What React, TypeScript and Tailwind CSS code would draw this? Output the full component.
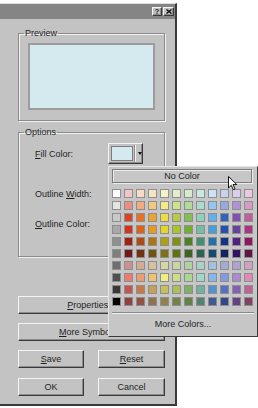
import type { ReactNode } from 'react';

const PALETTE: string[][] = [
  ['#ffffff', '#f2c6c4', '#f6dcc2', '#f6e4c2', '#f6f2c4', '#e4eec8', '#d4ebcc', '#c8e8e2', '#cce2f6', '#cad2f0', '#dacdee', '#ecc8e2'],
  ['#e4e4e4', '#ee8c84', '#f2aa7e', '#f4c87e', '#f4ea84', '#cee28c', '#b2da98', '#a8dccc', '#94c4f0', '#9aa8e2', '#b292d6', '#da98c6'],
  ['#c8c8c8', '#dc4224', '#ec7024', '#eea232', '#eedc42', '#b6cc42', '#82be50', '#92d0be', '#62aeee', '#3262c0', '#8250b0', '#be5e9c'],
  ['#a8a8a8', '#d4321a', '#de621a', '#e69a22', '#e6d624', '#a8c624', '#70ae32', '#72bea8', '#42a0de', '#2252b0', '#6442a0', '#ae3282'],
  ['#909090', '#a02212', '#ae4a12', '#ae7212', '#ae9e14', '#809014', '#508024', '#429070', '#2272ae', '#143482', '#522282', '#901464'],
  ['#7e7e7e', '#701a1a', '#703212', '#705212', '#7e7014', '#607014', '#406222', '#306252', '#144a70', '#142262', '#321262', '#601444'],
  ['#6e6e6e', '#cc9090', '#d4aa92', '#d6c0a2', '#d6d6a2', '#c8d6a2', '#b2d0a2', '#aad0c8', '#a2c0e0', '#a2aad6', '#b2a2d0', '#d0a2c2'],
  ['#505050', '#ee7a72', '#ee9a72', '#eec272', '#eeee82', '#c8e082', '#aad892', '#a2d6c8', '#82b8ee', '#829ae0', '#aa8ad0', '#e08ab8'],
  ['#383838', '#c65252', '#c67a4a', '#c6a05a', '#c6c05a', '#aac05a', '#82b062', '#72b0a2', '#5292d0', '#5272c0', '#8262b0', '#c06292'],
  ['#000000', '#904242', '#905242', '#907252', '#90824a', '#72824a', '#62824a', '#528272', '#425a90', '#324a82', '#624282', '#824262'],
];

const raised =
  'border border-t-[#f4f4f4] border-l-[#f4f4f4] border-r-[#3a3a3a] border-b-[#3a3a3a] shadow-[inset_-1px_-1px_0_#8c8c8c]';

const etched =
  'p-0 border border-[#8a8a8a] shadow-[inset_1px_1px_0_#f2f2f2,1px_1px_0_#f2f2f2]';

function Button({ children, className }: { children: ReactNode; className: string }) {
  return (
    <div className={`flex items-center justify-center h-[18px] ${raised} ${className}`}>
      <span>{children}</span>
    </div>
  );
}

function U({ children }: { children: ReactNode }) {
  return <span className="underline underline-offset-[1px] decoration-[1px]">{children}</span>;
}

export default function App() {
  return (
    <div className="relative w-[258px] h-[408px] bg-white overflow-hidden font-['Liberation_Sans',Arial,sans-serif] text-[9px] leading-[10px] text-[#1e1e1e]">
      {/* dialog */}
      <div className="mt-[3px] w-[177px] h-[403px] bg-[#c3c3c3] border-t border-t-[#dedede] border-r-2 border-r-[#3a3a3a] border-b-2 border-b-[#3a3a3a] flex flex-col">
        <div className="h-[15px] bg-[#858585] flex items-center justify-end gap-[1px] pr-[1px]">
          <div className={`w-[10px] h-[9px] bg-[#c3c3c3] flex items-center justify-center text-[8px] font-bold leading-none ${raised}`}>
            ?
          </div>
          <div className={`w-[11px] h-[9px] bg-[#c3c3c3] flex items-center justify-center ${raised}`}>
            <svg width="6" height="5" viewBox="0 0 6 5">
              <path d="M0.5 0.5 L5.5 4.5 M5.5 0.5 L0.5 4.5" stroke="#111" strokeWidth="1.4" />
            </svg>
          </div>
        </div>

        <div className="pl-[18px] pt-[9px] flex flex-col">
          <fieldset className={`w-[147px] h-[93px] ${etched}`}>
            <legend className="ml-[5px] px-[1px] leading-[10px]">Preview</legend>
            <div className="pl-[9px] pt-[5px]">
              <div className="w-[127px] h-[67px] border-2 border-[#9c9c9c] bg-[#d5eaee]" />
            </div>
          </fieldset>

          <fieldset className={`mt-[6px] w-[147px] h-[130px] ${etched}`}>
            <legend className="ml-[5px] px-[1px] leading-[10px]">Options</legend>
            <div className="pl-[16px] pt-[6px]">
              <div className="flex items-center h-[21px]">
                <div className="w-[73px]">
                  <U>F</U>ill Color:
                </div>
                <div className={`w-[35px] h-[21px] flex items-center pl-[2px] ${raised}`}>
                  <div className="w-[22px] h-[15px] border border-[#7c7c7c] bg-[#d5eaee]" />
                  <div className="ml-[1px] w-[1px] h-[17px] bg-[#8c8c8c]" />
                  <div className="w-[1px] h-[17px] bg-[#f4f4f4]" />
                  <svg className="ml-[2px]" width="4" height="3" viewBox="0 0 4 3">
                    <path d="M0 0 H4 L2 3 Z" fill="#111" />
                  </svg>
                </div>
              </div>
              <div className="mt-[20px] h-[20px] flex items-center">
                <span>
                  Outline <U>W</U>idth:
                </span>
              </div>
              <div className="mt-[10px] h-[20px] flex items-center">
                <span>
                  <U>O</U>utline Color:
                </span>
              </div>
            </div>
          </fieldset>

          <Button className="mt-[39px] w-[147px]">
            <U>P</U>roperties...
          </Button>
          <Button className="mt-[9px] w-[147px]">
            <U>M</U>ore Symbols...
          </Button>
          <div className="mt-[9px] flex gap-[14px]">
            <Button className="w-[66px]">
              <U>S</U>ave
            </Button>
            <Button className="w-[67px]">
              <U>R</U>eset
            </Button>
          </div>
          <div className="mt-[10px] flex gap-[14px]">
            <Button className="w-[66px]">OK</Button>
            <Button className="w-[67px]">Cancel</Button>
          </div>
        </div>
      </div>

      {/* colour picker popup */}
      <div className="absolute left-[108px] top-[166px] w-[150px] h-[171px] bg-[#c6c6c6] border border-t-[#e6e6e6] border-l-[#e6e6e6] border-r-[#3a3a3a] border-b-[#3a3a3a] flex flex-col px-[3px] pt-[2px]">
        <div className="w-[140px] h-[14px] border border-[#7c7c7c] shadow-[1px_1px_0_#ececec,inset_1px_1px_0_#ececec] flex items-center justify-center">
          No Color
        </div>
        <div className="mt-[6px] grid grid-cols-[repeat(12,9px)] gap-[3px]">
          {PALETTE.flat().map((c, i) => (
            <div key={i} className="w-[9px] h-[9px] border border-[#8e8e8e]" style={{ backgroundColor: c }} />
          ))}
        </div>
        <div className="mt-[6px] border-t border-t-[#8a8a8a] border-b border-b-[#efefef]" />
        <div className="h-[19px] flex items-center justify-center">More Colors...</div>
      </div>

      {/* mouse pointer */}
      <svg className="absolute left-[228px] top-[176px]" width="10" height="15" viewBox="0 0 10 15">
        <path d="M0.5 0.5 L0.5 12 L3.3 9.3 L5.3 13.8 L7 13 L5 8.6 L8.8 8.6 Z" fill="#fff" stroke="#111" strokeWidth="1" strokeLinejoin="round" />
      </svg>
    </div>
  );
}
